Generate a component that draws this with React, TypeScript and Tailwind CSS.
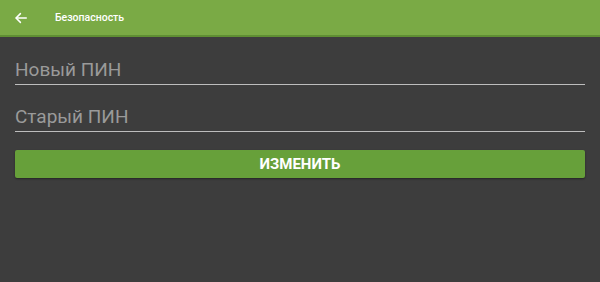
import React from "react";

const App = () => {
    return (
        <div className="w-[600px] h-[282px] bg-[#3d3d3d] flex flex-col" style={{ fontFamily: "Roboto, 'Liberation Sans', sans-serif" }}>
            <div className="h-[37px] bg-[#7aaa45] border-b-2 border-[#5f8f33] flex items-center shrink-0">
                <div className="w-[55px] flex items-center pl-[14px]">
                    <svg width="14" height="14" viewBox="0 0 24 24" fill="none" stroke="#ffffff" strokeWidth="2.6" strokeLinecap="round" strokeLinejoin="round">
                        <path d="M21 12H4" />
                        <path d="M11 4.5L3.5 12l7.5 7.5" />
                    </svg>
                </div>
                <span className="text-white text-[10.5px] font-medium">Безопасность</span>
            </div>

            <div className="px-[15px] flex flex-col">
                <div className="border-b border-[#bdbdbd] h-[48px] flex items-end pb-[2px]">
                    <span className="text-[19px] text-[#9a9a9a] leading-[24px]">Новый ПИН</span>
                </div>
                <div className="border-b border-[#bdbdbd] h-[47px] flex items-end pb-[2px]">
                    <span className="text-[19px] text-[#9a9a9a] leading-[24px]">Старый ПИН</span>
                </div>
                <button className="mt-[18px] h-[28px] w-full bg-[#67a03a] rounded-[2px] shadow-[0_1px_2px_rgba(0,0,0,0.4)] text-white text-[15px] font-bold uppercase flex items-center justify-center">
                    Изменить
                </button>
            </div>
        </div>
    );
};

export default App;
